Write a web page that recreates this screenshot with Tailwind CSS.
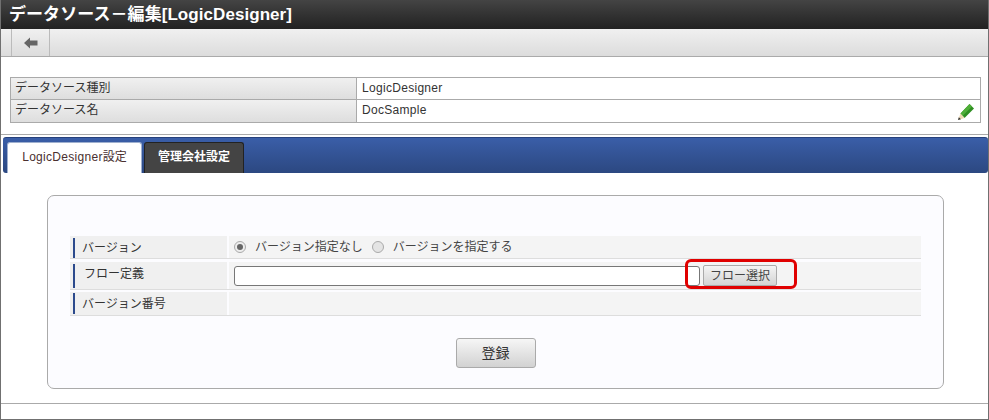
<!DOCTYPE html>
<html lang="ja">
<head>
  <meta charset="UTF-8">
  <script src="https://cdn.jsdelivr.net/npm/@tailwindcss/browser@4"></script>
  <title>データソース編集</title>
</head>
<body class="bg-white">
  <div class="relative w-[989px] h-[420px] overflow-hidden border-x border-b border-[#707070] font-['Liberation_Sans','Noto_Sans_CJK_JP',sans-serif] text-[#333]">
    <!-- title -->
    <div class="h-[29px] pl-[9px] bg-gradient-to-b from-[#444] to-[#222] text-white text-[17px] font-bold leading-[30px] tracking-[0.06px] -mx-px">データソース－編集[LogicDesigner]</div>

    <!-- toolbar -->
    <div class="h-[28px] pl-[10px] bg-gradient-to-b from-[#f0f0f0] to-[#dcdcdc] border-b border-[#aaa]">
      <div class="flex items-center justify-center w-[39px] h-full border-x border-[#bbb]">
        <svg width="14" height="12" viewBox="0 0 14 12"><path d="M0 6 L6 0.5 V3.5 H13.5 V8.5 H6 V11.5 Z" fill="#666"/></svg>
      </div>
    </div>

    <!-- info table -->
    <div class="ml-[9px] mr-[7px] mt-5 border border-[#aaa] text-[12px]">
      <div class="flex h-[22px] border-b border-[#aaa]">
        <div class="w-[346px] pl-[4px] leading-[21px] border-r border-[#aaa] bg-gradient-to-b from-[#f0f0f0] to-[#dedede]">データソース種別</div>
        <div class="flex-1 pl-[5px] leading-[21px] tracking-[0.3px]">LogicDesigner</div>
      </div>
      <div class="flex h-[22px]">
        <div class="w-[346px] pl-[4px] leading-[21px] border-r border-[#aaa] bg-gradient-to-b from-[#f0f0f0] to-[#dedede]">データソース名</div>
        <div class="flex-1 flex items-start justify-between pl-[5px] pr-[6px]">
          <span class="tracking-[0.3px] leading-[20px]">DocSample</span>
          <svg width="16" height="16" viewBox="0 0 16 16" class="mt-[4px]">
            <path d="M2.5 9.5 L11.5 0 L16 4.5 L6.5 14 Z" fill="#2f8f22"/>
            <path d="M2.5 9.5 L11.5 0 L14 2.5 L4.5 12 Z" fill="#4fae38"/>
            <path d="M2.5 9.5 L6.5 14 L0 16 Z" fill="#ecd9b0"/>
            <path d="M0 16 L0.8 13.2 L3 15.2 Z" fill="#333"/>
          </svg>
        </div>
      </div>
    </div>

    <div class="mt-[11px] border-t border-[#aaa]"></div>

    <!-- tabs -->
    <div class="flex items-end gap-[2px] h-[36px] ml-[2px] mt-[2px] pl-[4px] rounded-[3px] border-t border-[#26407c] border-b-0 bg-gradient-to-b from-[#3a5ea8] to-[#2c4881] text-[12px]">
      <div class="w-[135px] h-[31px] text-center leading-[29px] bg-white border border-b-0 border-[#9fb0cf] rounded-t-[3px] text-[#4a3030] tracking-[0.3px]">LogicDesigner<span class="tracking-normal">設定</span></div>
      <div class="w-[100px] h-[31px] text-center leading-[29px] bg-[#444] border border-b-0 border-[#222] rounded-t-[3px] text-white font-bold">管理会社設定</div>
    </div>

    <!-- form card -->
    <div class="ml-[46px] mt-[22px] w-[897px] h-[194px] pt-[40px] px-[22px] bg-[#fcfcff] border border-[#aaa] rounded-[7px]">
      <div class="flex flex-col text-[12px]">
        <div class="flex h-[23px] border-b border-[#ddd] gap-[2px]">
          <div class="w-[157px] bg-[#f0f0f0] py-[2px]"><div class="h-[20px] pl-[7px] border-l-2 border-[#2c4a8c] leading-[20px] ml-[3px]">バージョン</div></div>
          <div class="flex-1 bg-[#f4f4f4] flex items-center pl-[5px] text-[#444]">
            <span class="flex items-center justify-center w-[12px] h-[12px] rounded-full border border-[#aaa] bg-[#eee]"><span class="w-[6px] h-[6px] rounded-full bg-[#666]"></span></span>
            <span class="ml-[9px]">バージョン指定なし</span>
            <span class="ml-[9px] w-[12px] h-[12px] rounded-full border border-[#aaa] bg-[#e4e4e4]"></span>
            <span class="ml-[9px]">バージョンを指定する</span>
          </div>
        </div>
        <div class="flex h-[28px] border-b border-[#ddd] gap-[2px] mt-[3px]">
          <div class="w-[157px] bg-[#f0f0f0] py-[2px]"><div class="h-[24px] pl-[9px] border-l-2 border-[#2c4a8c] leading-[21px] ml-[3px]">フロー定義</div></div>
          <div class="relative flex-1 bg-[#f4f4f4] flex items-start pt-[4px] pl-[5px]">
            <input type="text" class="w-[466px] h-[20px] bg-white border border-[#777] rounded-[3px]">
            <button class="ml-[3px] -mt-px w-[74px] h-[21px] text-[12px] text-[#444] border border-[#aaa] rounded-[2px] bg-gradient-to-b from-[#f4f4f4] to-[#d4d4d4]">フロー選択</button>
            <div class="absolute left-[456px] top-[-3px] w-[112px] h-[30px] border-[3px] border-[#e00000] rounded-[6px]"></div>
          </div>
        </div>
        <div class="flex h-[24px] border-b border-[#ddd] gap-[2px] mt-[2px]">
          <div class="w-[157px] bg-[#f0f0f0] py-[1px]"><div class="h-[21px] pl-[7px] border-l-2 border-[#2c4a8c] leading-[22px] ml-[3px]">バージョン番号</div></div>
          <div class="flex-1 bg-[#f4f4f4]"></div>
        </div>
      </div>
      <div class="flex justify-center mt-[22px]">
        <button class="w-[80px] h-[30px] text-[14px] text-[#333] border border-[#aaa] rounded-[3px] bg-gradient-to-b from-[#f6f6f6] to-[#d2d2d2]">登録</button>
      </div>
    </div>

    <div class="mt-[14px] border-t border-[#aaa]"></div>
  </div>
</body>
</html>
